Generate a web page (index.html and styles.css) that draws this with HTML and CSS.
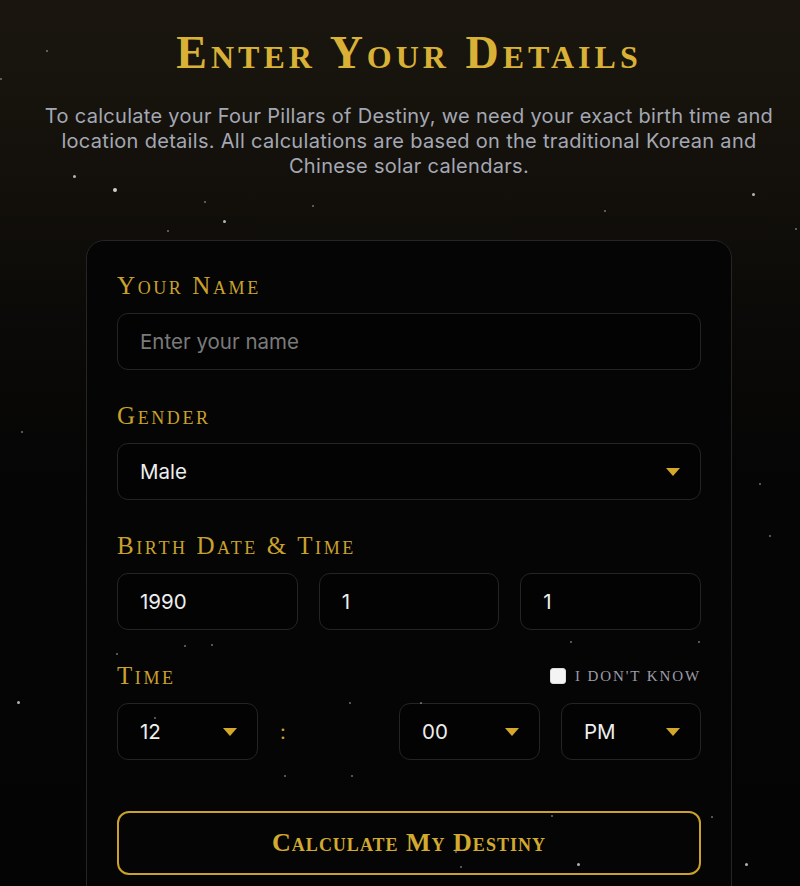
FILE: index.html
```html
<!DOCTYPE html>
<html lang="en">
<head>
<meta charset="utf-8">
<title>Enter Your Details</title>
<link rel="stylesheet" href="styles.css">
</head>
<body>
<div class="stars" aria-hidden="true">
  <span class="star" style="left:73px;top:175px"></span>
  <span class="star big" style="left:113px;top:188px"></span>
  <span class="star sm" style="left:204px;top:201px"></span>
  <span class="star" style="left:223px;top:220px"></span>
  <span class="star sm" style="left:167px;top:230px"></span>
  <span class="star sm" style="left:312px;top:205px"></span>
  <span class="star sm" style="left:0px;top:78px"></span>
  <span class="star sm" style="left:46px;top:50px"></span>
  <span class="star" style="left:752px;top:193px"></span>
  <span class="star sm" style="left:604px;top:210px"></span>
  <span class="star sm" style="left:795px;top:228px"></span>
  <span class="star sm" style="left:21px;top:431px"></span>
  <span class="star" style="left:17px;top:701px"></span>
  <span class="star sm" style="left:759px;top:483px"></span>
  <span class="star sm" style="left:769px;top:535px"></span>
  <span class="star sm" style="left:698px;top:641px"></span>
  <span class="star sm" style="left:711px;top:816px"></span>
  <span class="star" style="left:745px;top:863px"></span>
  <span class="star sm" style="left:116px;top:653px"></span>
  <span class="star sm" style="left:184px;top:645px"></span>
  <span class="star sm" style="left:211px;top:644px"></span>
  <span class="star sm" style="left:570px;top:641px"></span>
  <span class="star sm" style="left:349px;top:702px"></span>
  <span class="star sm" style="left:420px;top:702px"></span>
  <span class="star sm" style="left:154px;top:717px"></span>
  <span class="star sm" style="left:284px;top:775px"></span>
  <span class="star sm" style="left:351px;top:775px"></span>
  <span class="star sm" style="left:455px;top:851px"></span>
  <span class="star sm" style="left:460px;top:866px"></span>
  <span class="star" style="left:577px;top:863px"></span>
  <span class="star sm" style="left:551px;top:815px"></span>
</div>

<main class="page">
  <h1 class="title">Enter Your Details</h1>
  <p class="intro">To calculate your Four Pillars of Destiny, we need your exact birth time and location details. All calculations are based on the traditional Korean and Chinese solar calendars.</p>

  <form class="card">
    <div class="field">
      <label class="label" for="name">Your Name</label>
      <input class="control" id="name" type="text" placeholder="Enter your name">
    </div>

    <div class="field">
      <label class="label" for="gender">Gender</label>
      <div class="select-wrap">
        <select class="control select" id="gender">
          <option>Male</option>
          <option>Female</option>
        </select>
        <svg class="caret" width="14" height="8" viewBox="0 0 14 8"><path d="M0 0H14L7 8Z" fill="#d4a82a"/></svg>
      </div>
    </div>

    <div class="field">
      <label class="label" for="year">Birth Date &amp; Time</label>
      <div class="date-row">
        <input class="control" id="year" type="text" value="1990">
        <input class="control" type="text" value="1">
        <input class="control" type="text" value="1">
      </div>
    </div>

    <div class="field">
      <div class="label-row">
        <span class="label">Time</span>
        <label class="unknown"><input type="checkbox" class="check"><span>I don't know</span></label>
      </div>
      <div class="time-row">
        <div class="select-wrap">
          <select class="control select"><option>12</option></select>
          <svg class="caret" width="14" height="8" viewBox="0 0 14 8"><path d="M0 0H14L7 8Z" fill="#d4a82a"/></svg>
        </div>
        <span class="colon">:</span>
        <div class="select-wrap">
          <select class="control select"><option>00</option></select>
          <svg class="caret" width="14" height="8" viewBox="0 0 14 8"><path d="M0 0H14L7 8Z" fill="#d4a82a"/></svg>
        </div>
        <div class="select-wrap">
          <select class="control select"><option>PM</option></select>
          <svg class="caret" width="14" height="8" viewBox="0 0 14 8"><path d="M0 0H14L7 8Z" fill="#d4a82a"/></svg>
        </div>
      </div>
    </div>

    <button type="button" class="submit">Calculate My Destiny</button>
  </form>
</main>
</body>
</html>
```
FILE: styles.css
```css
* { box-sizing: border-box; }

html, body {
  margin: 0;
  height: 100%;
}

body {
  position: relative;
  overflow: hidden;
  font-family: Inter, "Noto Sans", sans-serif;
  color: #e8e8e8;
  background: linear-gradient(180deg, #1a160f 0px, #13100b 180px, #0a0907 330px, #050505 480px, #040404 100%);
}

.stars {
  position: absolute;
  inset: 0;
  pointer-events: none;
  z-index: 2;
}

.star {
  position: absolute;
  width: 3px;
  height: 3px;
  border-radius: 50%;
  background: rgba(235, 235, 235, 0.75);
}
.star.big { width: 4px; height: 4px; background: rgba(240,240,240,0.85); }
.star.sm { width: 2px; height: 2px; background: rgba(200,200,200,0.55); }

.page {
  position: relative;
  z-index: 1;
  display: flex;
  flex-direction: column;
  align-items: center;
  padding: 27px 0 0 18px;
}

.title {
  margin: 0;
  font-family: "Liberation Serif", "Times New Roman", serif;
  font-variant: small-caps;
  font-weight: 700;
  font-size: 46px;
  line-height: 52px;
  letter-spacing: 4px;
  color: #d8b136;
}

.intro {
  margin: 25px 0 0;
  max-width: 745px;
  text-align: center;
  font-size: 20px;
  line-height: 25px;
  letter-spacing: 0.3px;
  color: #a4a8b4;
}

.card {
  width: 646px;
  margin-top: 61px;
  padding: 30px 30px 40px;
  border: 1px solid #252525;
  border-radius: 18px;
  background: #050505;
  display: flex;
  flex-direction: column;
}

.field {
  display: flex;
  flex-direction: column;
  gap: 12px;
  margin-bottom: 31px;
}

.label {
  font-family: "Liberation Serif", "Times New Roman", serif;
  font-variant: small-caps;
  font-size: 25px;
  line-height: 30px;
  letter-spacing: 2.6px;
  color: #c9a12c;
}

.label-row {
  display: flex;
  justify-content: space-between;
  align-items: center;
}

.unknown {
  display: flex;
  align-items: center;
  gap: 9px;
  font-family: "Liberation Serif", "Times New Roman", serif;
  text-transform: uppercase;
  font-size: 15px;
  letter-spacing: 1.9px;
  color: #9c9ca8;
}

.check {
  appearance: none;
  margin: 0;
  width: 16px;
  height: 16px;
  border-radius: 3px;
  background: #f4f4f4;
  border: 1px solid #ddd;
}

.control {
  width: 100%;
  height: 57px;
  padding: 0 22px;
  border: 1px solid #242424;
  border-radius: 11px;
  background: #030303;
  color: #eeeeee;
  font-family: Inter, "Noto Sans", sans-serif;
  font-size: 20.5px;
  outline: none;
}

.control::placeholder { color: #7a7a7a; }

.select-wrap {
  position: relative;
}

.select {
  appearance: none;
  -webkit-appearance: none;
}

.caret {
  position: absolute;
  right: 21px;
  top: 25px;
  pointer-events: none;
}

.date-row {
  display: grid;
  grid-template-columns: 1fr 1fr 1fr;
  gap: 21px;
}

.time-row {
  display: grid;
  grid-template-columns: 141px 1fr 141px 140px;
  column-gap: 21px;
  align-items: center;
}

.colon {
  color: #c9a12c;
  font-size: 20px;
  padding-left: 1px;
}

.submit {
  margin-top: 20px;
  height: 64px;
  border: 2px solid #c9a12c;
  border-radius: 12px;
  background: transparent;
  font-family: "Liberation Serif", "Times New Roman", serif;
  font-variant: small-caps;
  font-weight: 700;
  font-size: 26px;
  letter-spacing: 1px;
  color: #d2aa30;
  cursor: pointer;
}
```
